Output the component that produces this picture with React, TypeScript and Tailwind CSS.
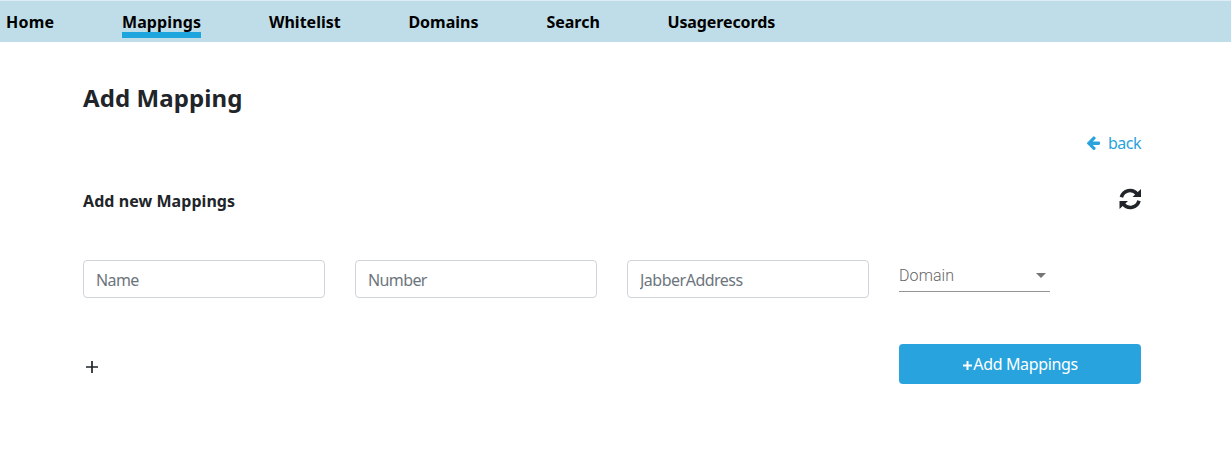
const tabs = [
  { label: "Home", width: "w-[48px] tracking-[0.2px]" },
  { label: "Mappings", width: "w-[79px] tracking-[0.1px]", active: true },
  { label: "Whitelist", width: "w-[71.400px]" },
  { label: "Domains", width: "w-[70px]" },
  { label: "Search", width: "w-[53px]" },
  { label: "Usagerecords", width: "w-[108px] tracking-[-0.1px]" },
];

const fields = [
  { name: "Name", tracking: "placeholder:tracking-[-0.6px]" },
  { name: "Number", tracking: "placeholder:tracking-[-0.6px]" },
  { name: "JabberAddress", tracking: "placeholder:tracking-[-0.5px]" },
];

function ArrowLeftIcon() {
  return (
    <svg viewBox="0 0 1472 1558" className="h-[14px] w-[13px]" fill="currentColor" aria-hidden="true">
      <path d="M1472 736v128q0 53-32.500 90.500t-84.500 37.500h-704l293 294q38 36 38 90t-38 90l-75 76q-37 37-90 37-52 0-91-37l-651-652q-37-37-37-90 0-52 37-91l651-650q38-38 91-38 52 0 90 38l75 74q38 38 38 91t-38 91l-293 293h704q52 0 84.500 37.500t32.500 90.500z" />
    </svg>
  );
}

function RefreshIcon() {
  return (
    <svg viewBox="0 0 22 22" className="h-[22px] w-[22px]" aria-hidden="true">
      <g fill="none" stroke="currentColor" strokeWidth="3.600">
        <path d="M2.400 9.200A8.900 8.900 0 0 1 18 5.900" />
        <path d="M20 12.800A8.900 8.900 0 0 1 4.400 16.100" />
      </g>
      <path fill="currentColor" d="M22 1V9h-8.500zM.5 21V13h8.500z" />
    </svg>
  );
}

export default function App() {
  return (
    <div className="h-[473px] w-full bg-white font-['Noto_Sans',sans-serif] text-base text-[#212529]">
      <nav className="flex h-[42px] items-start gap-[68px] border-t border-[#deedf3] bg-[#bfdde8] pt-[9px] pl-[6px] font-bold text-black">
        {tabs.map((tab) => (
          <a
            key={tab.label}
            href="#"
            className={`h-[28px] whitespace-nowrap leading-6 ${tab.width} ${tab.active ? "border-b-[6px] border-[#1fa5dd]" : ""}`}
          >
            {tab.label}
          </a>
        ))}
      </nav>
      <main className="mr-[90px] ml-[83px] flex flex-col pt-[41px]">
        <h1 className="text-2xl leading-[30px] font-bold tracking-[0.1px]">Add Mapping</h1>
        <a href="#" className="mt-[18px] flex items-center gap-2 self-end leading-6 text-[#2aa3dc]">
          <ArrowLeftIcon />
          <span className="tracking-[-0.5px]">back</span>
        </a>
        <div className="mt-[31px] flex h-[26px] items-center justify-between">
          <h2 className="pt-1 font-bold tracking-[0.06px]">Add new Mappings</h2>
          <button type="button" aria-label="Refresh"><RefreshIcon /></button>
        </div>
        <form className="mt-[48px]">
          <div className="grid grid-cols-4 gap-[30px]">
            {fields.map((field) => (
              <input
                key={field.name}
                placeholder={field.name}
                className={`h-[38px] min-w-0 rounded border border-[#ced4da] bg-white px-3 pt-[2px] placeholder:text-[#6c757d] ${field.tracking}`}
              />
            ))}
            <div className="flex h-[32px] w-[151px] items-center justify-between border-b border-[#949494] pr-1 font-['Roboto',sans-serif] font-light text-[#666]">
              <span className="tracking-[0.1px]">Domain</span>
              <svg viewBox="0 0 10 5" className="h-[5px] w-[10px] text-[#757575]" fill="currentColor" aria-hidden="true">
                <path d="M0 0h10L5 5z" />
              </svg>
            </div>
          </div>
          <div className="mt-[46px] flex h-[40px] items-center justify-between">
            <button type="button" aria-label="Add row" className="pt-[6px] pl-[3px]">
              <svg viewBox="0 0 12 12" className="h-[12px] w-[12px]" stroke="currentColor" strokeWidth="1.700" aria-hidden="true">
                <path d="M6 0v12M0 6h12" />
              </svg>
            </button>
            <button type="button" className="flex h-[40px] w-[242px] items-center justify-center rounded bg-[#28a3de] text-white">
              <svg viewBox="0 0 9 9" className="mt-[3px] mr-px ml-px h-[9px] w-[9px]" stroke="currentColor" strokeWidth="2" aria-hidden="true">
                <path d="M4.500 0v9M0 4.500h9" />
              </svg>
              <span className="tracking-[-0.36px]">Add Mappings</span>
            </button>
          </div>
        </form>
      </main>
    </div>
  );
}
